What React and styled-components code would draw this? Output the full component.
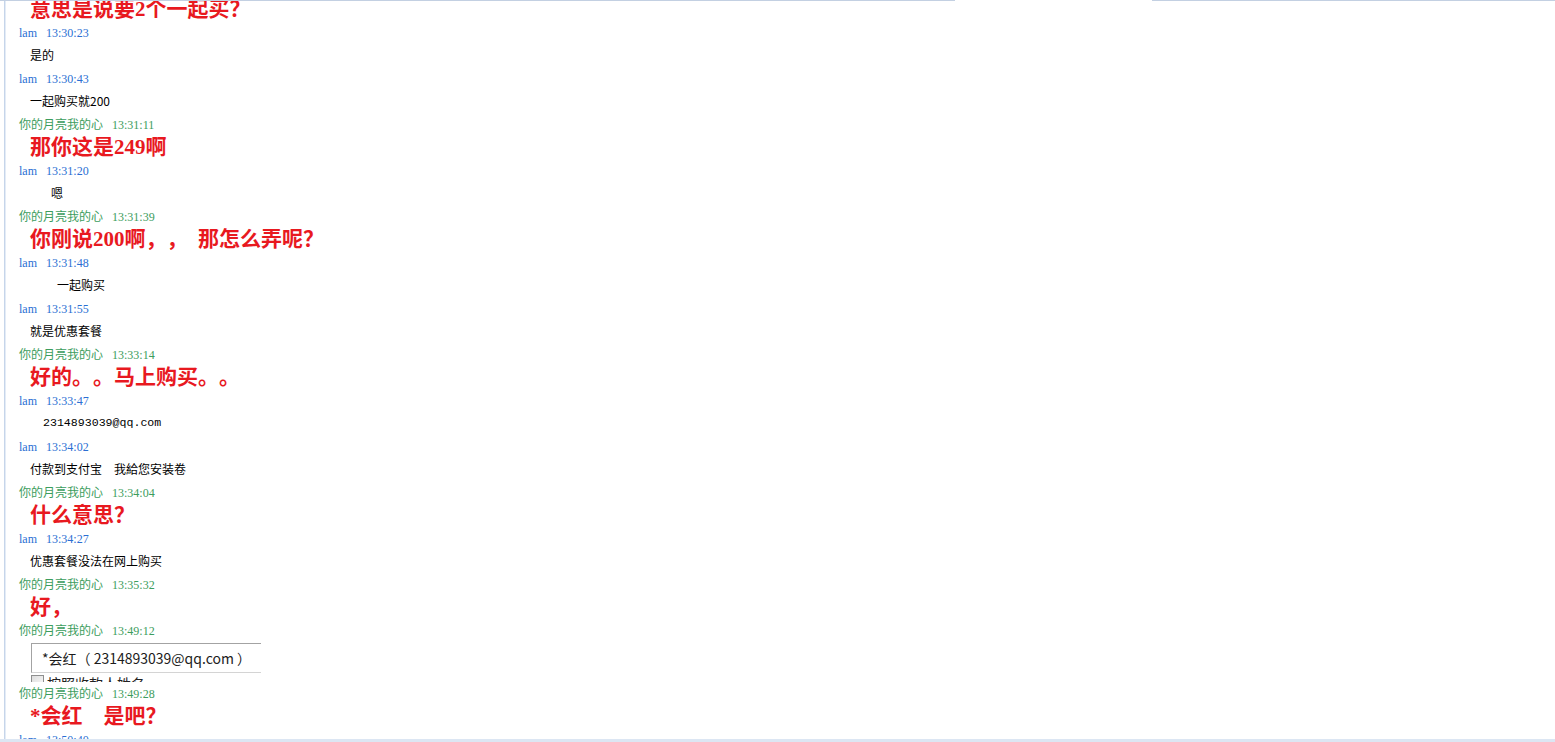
import React from 'react';
import styled, { createGlobalStyle } from 'styled-components';

const GlobalStyle = createGlobalStyle`
  html, body {
    margin: 0;
    padding: 0;
    background: #fff;
    overflow: hidden;
  }
  * {
    text-spacing-trim: space-all;
  }
`;

const Frame = styled.div`
  position: relative;
  width: 1555px;
  height: 742px;
  overflow: hidden;
  background: #fff;
  display: flex;
  flex-direction: column;
`;

const TopEdge = styled.div`
  display: flex;
  height: 1px;
  flex-shrink: 0;
`;

const EdgeSegment = styled.div`
  height: 1px;
  background: #c3d0e2;
  width: ${props => (props.$width ? `${props.$width}px` : 'auto')};
  flex: ${props => (props.$width ? 'none' : 1)};
  margin-left: ${props => props.$offset || 0}px;
`;

const Main = styled.div`
  display: flex;
  flex: 1;
  min-height: 0;
  overflow: hidden;
`;

const LeftRule = styled.div`
  width: 2px;
  margin-left: 4px;
  flex-shrink: 0;
  background: linear-gradient(to right, #c6d5ea 50%, #e4ecf6 50%);
`;

const Log = styled.div`
  flex: 1;
  margin-top: -3px;
`;

const Header = styled.div`
  display: flex;
  align-items: baseline;
  gap: 9px;
  height: 23px;
  box-sizing: border-box;
  padding: ${props => (props.$self ? '0' : '2px')} 0 0 13px;
  line-height: 21px;
  font-size: 12px;
  color: ${props => (props.$self ? '#3c9d5d' : '#2a6fd3')};
`;

const Name = styled.span`
  font-family: ${props =>
    props.$self ? '"Noto Sans CJK SC", sans-serif' : '"Liberation Serif", serif'};
`;

const Time = styled.span`
  font-family: "Liberation Serif", serif;
`;

const Text = styled.div`
  height: 23px;
  line-height: 21px;
  padding-left: ${props => props.$indent || 24}px;
  font-size: ${props => (props.$mono ? '11.6px' : '12px')};
  color: #000;
  white-space: pre;
  font-family: ${props =>
    props.$mono ? '"Liberation Mono", monospace' : '"Noto Sans CJK SC", sans-serif'};
`;

const Shout = styled.div`
  height: 23px;
  line-height: 23px;
  padding-left: 24px;
  font-family: "Liberation Serif", "Noto Sans CJK SC", serif;
  font-size: 21px;
  font-weight: bold;
  color: #e8191f;
  white-space: pre;
`;

const SnapRow = styled.div`
  height: 40px;
  padding: 1px 0 0 25px;
  box-sizing: border-box;
  overflow: hidden;
`;

const SnapBox = styled.div`
  width: 230px;
  height: 30px;
  box-sizing: border-box;
  border-top: 1px solid #a3a3a3;
  border-left: 1px solid #a3a3a3;
  border-bottom: 1px solid #d4d4d4;
  padding-left: 10px;
  line-height: 28px;
  font-family: "Noto Sans CJK SC", sans-serif;
  font-size: 14px;
  color: #1c1c1c;
  white-space: pre;
  overflow: hidden;
`;

const CheckLine = styled.div`
  display: flex;
  align-items: flex-start;
  gap: 3px;
  height: 7px;
  margin-top: 2px;
  overflow: hidden;
  font-family: "Noto Sans CJK SC", sans-serif;
  font-size: 14px;
  line-height: 16px;
  color: #222;
`;

const CheckBox = styled.span`
  width: 13px;
  height: 13px;
  box-sizing: border-box;
  border: 1px solid #8e8f8f;
  background: linear-gradient(135deg, #dcdcdc, #fbfbfb);
  flex-shrink: 0;
`;

const BottomBar = styled.div`
  position: absolute;
  left: 0;
  right: 0;
  bottom: 0;
  height: 3px;
  background: #dce6f3;
`;

const SELF = '你的月亮我的心';

const entries = [
  { kind: 'shout', text: '意思是说要2个一起买？' },
  { kind: 'head', who: 'lam', time: '13:30:23' },
  { kind: 'text', text: '是的' },
  { kind: 'head', who: 'lam', time: '13:30:43' },
  { kind: 'text', text: '一起购买就200' },
  { kind: 'head', self: true, time: '13:31:11' },
  { kind: 'shout', text: '那你这是249啊' },
  { kind: 'head', who: 'lam', time: '13:31:20' },
  { kind: 'text', text: '嗯', indent: 45 },
  { kind: 'head', self: true, time: '13:31:39' },
  { kind: 'shout', text: '你刚说200啊，，  那怎么弄呢？' },
  { kind: 'head', who: 'lam', time: '13:31:48' },
  { kind: 'text', text: '一起购买', indent: 51 },
  { kind: 'head', who: 'lam', time: '13:31:55' },
  { kind: 'text', text: '就是优惠套餐' },
  { kind: 'head', self: true, time: '13:33:14' },
  { kind: 'shout', text: '好的。。马上购买。。' },
  { kind: 'head', who: 'lam', time: '13:33:47' },
  { kind: 'text', text: '2314893039@qq.com', indent: 37, mono: true },
  { kind: 'head', who: 'lam', time: '13:34:02' },
  { kind: 'text', text: '付款到支付宝　我給您安装卷' },
  { kind: 'head', self: true, time: '13:34:04' },
  { kind: 'shout', text: '什么意思？' },
  { kind: 'head', who: 'lam', time: '13:34:27' },
  { kind: 'text', text: '优惠套餐没法在网上购买' },
  { kind: 'head', self: true, time: '13:35:32' },
  { kind: 'shout', text: '好，' },
  { kind: 'head', self: true, time: '13:49:12' },
  { kind: 'snap', text: '*会红（ 2314893039@qq.com ）', note: '按照收款人姓名' },
  { kind: 'head', self: true, time: '13:49:28' },
  { kind: 'shout', text: '*会红　是吧？' },
  { kind: 'head', who: 'lam', time: '13:50:40' },
];

const Entry = ({ entry }) => {
  switch (entry.kind) {
    case 'head':
      return (
        <Header $self={entry.self}>
          <Name $self={entry.self}>{entry.self ? SELF : entry.who}</Name>
          <Time>{entry.time}</Time>
        </Header>
      );
    case 'shout':
      return <Shout>{entry.text}</Shout>;
    case 'snap':
      return (
        <SnapRow>
          <SnapBox>{entry.text}</SnapBox>
          <CheckLine>
            <CheckBox />
            <span>{entry.note}</span>
          </CheckLine>
        </SnapRow>
      );
    default:
      return (
        <Text $indent={entry.indent} $mono={entry.mono}>
          {entry.text}
        </Text>
      );
  }
};

const App = () => (
  <>
    <GlobalStyle />
    <Frame>
      <TopEdge>
        <EdgeSegment $width={955} />
        <EdgeSegment $offset={197} />
      </TopEdge>
      <Main>
        <LeftRule />
        <Log>
          {entries.map((entry, i) => (
            <Entry key={i} entry={entry} />
          ))}
        </Log>
      </Main>
      <BottomBar />
    </Frame>
  </>
);

export default App;
